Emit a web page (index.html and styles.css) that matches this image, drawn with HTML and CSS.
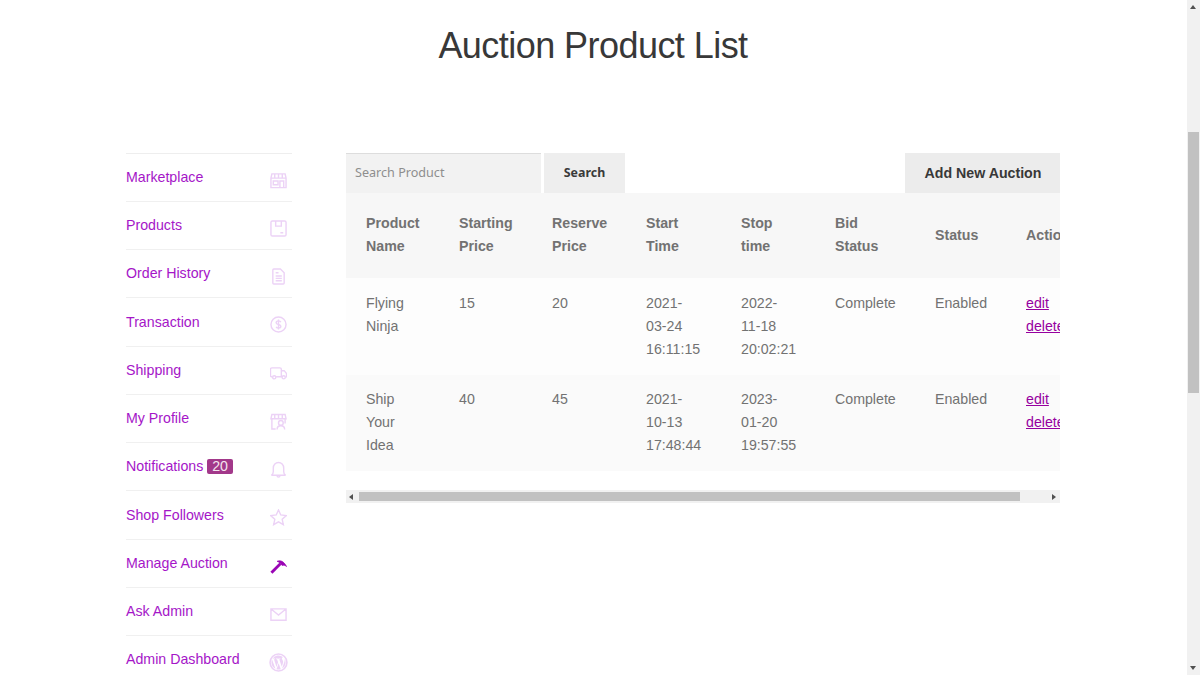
FILE: index.html
```html
<!DOCTYPE html>
<html lang="en">
<head>
<meta charset="utf-8">
<title>Auction Product List</title>
<link rel="stylesheet" href="styles.css">
</head>
<body>
<div class="page">
  <h1 class="title">Auction Product List</h1>
  <div class="layout">
    <nav class="side">
      <a class="item" href="#"><span>Marketplace</span>
        <svg class="ico" viewBox="0 0 18 18"><path d="M2 2h14l1 4.500v10h-16v-10zM1 6.500h16M5 2v4.500M9 2v4.500M13 2v4.500M3.500 9.500h5v4h-5zM10.500 16.500v-7h4v7"/></svg></a>
      <a class="item" href="#"><span>Products</span>
        <svg class="ico" viewBox="0 0 18 18"><path d="M2.500 1h13a1.500 1.500 0 0 1 1.500 1.500v13a1.500 1.500 0 0 1-1.500 1.500h-13a1.500 1.500 0 0 1-1.500-1.500v-13a1.500 1.500 0 0 1 1.500-1.500zM6 1v5.500h6v-5.500M11 13.500h3"/></svg></a>
      <a class="item" href="#"><span>Order History</span>
        <svg class="ico" viewBox="0 0 18 18"><path d="M4 1h7l4 4v11a1 1 0 0 1-1 1h-10a1 1 0 0 1-1-1v-14a1 1 0 0 1 1-1zM6 5h3M6 8.500h6.500M6 11h6.500M6 13.500h6.500"/></svg></a>
      <a class="item" href="#"><span>Transaction</span>
        <svg class="ico" viewBox="0 0 18 18"><circle cx="9" cy="9" r="8"/><path d="M11.500 6.500c-.5-1-1.500-1.300-2.500-1.300-1.300 0-2.500.7-2.500 1.900 0 2.700 5 1.200 5 3.800 0 1.200-1.200 1.900-2.500 1.900-1 0-2-.4-2.500-1.300M9 3.800v10.400"/></svg></a>
      <a class="item" href="#"><span>Shipping</span>
        <svg class="ico" viewBox="0 0 18 18"><path d="M2.500 12.500h-.5a1.500 1.500 0 0 1-1.500-1.500v-6.500a1.500 1.500 0 0 1 1.500-1.500h8.500a1.500 1.500 0 0 1 1.500 1.500v8h-5.500M12 6h3l2.500 3v3.500h-1M12 12.500h.5"/><circle cx="4.500" cy="13" r="1.700"/><circle cx="14.500" cy="13" r="1.700"/></svg></a>
      <a class="item" href="#"><span>My Profile</span>
        <svg class="ico" viewBox="0 0 18 18"><path d="M2 1.500h14l1 4.500h-16zM5 1.500v4.500M9 1.500v4.500M13 1.500v4.500M2 6v11h4M16 6v5M2 13v-1"/><circle cx="11.500" cy="10.500" r="2.500"/><path d="M7.500 17.500c0-3 1.500-4 4-4s4 1 4 4"/></svg></a>
      <a class="item" href="#"><span class="label">Notifications <b class="badge">20</b></span>
        <svg class="ico" viewBox="0 0 18 18"><path d="M1.500 15c1.300-.7 2-2 2-4v-3.500a5.500 6 0 0 1 11 0v3.500c0 2 .7 3.300 2 4zM7.500 15.500c0 2 3 2 3 0"/></svg></a>
      <a class="item" href="#"><span>Shop Followers</span>
        <svg class="ico" viewBox="0 0 18 18"><path d="M9 1l2.400 5.300 5.800.7-4.300 3.900 1.200 5.700-5.100-2.900-5.100 2.900 1.200-5.700-4.300-3.900 5.800-.7z"/></svg></a>
      <a class="item" href="#"><span>Manage Auction</span>
        <svg class="ico" viewBox="0 0 18 18"><path class="handle" d="M1.500 15.500l9.500-9.500"/><path class="fill" d="M7.500 3.500c3-1.300 7-.5 10 5.500-1.500-1.300-3-1.800-4.500-1l-2.500-2.500c-.8-1-1.800-1.700-3-2z"/></svg></a>
      <a class="item" href="#"><span>Ask Admin</span>
        <svg class="ico" viewBox="0 0 18 18"><path d="M1 3h16v12h-16zM1.500 3.500l7.500 6 7.500-6"/></svg></a>
      <a class="item" href="#"><span>Admin Dashboard</span>
        <svg class="ico ico-big" viewBox="0 0 18 18"><circle cx="9" cy="9" r="8"/><path class="wp" d="M2.300 9c0 2.700 1.600 5 3.800 6l-3.200-8.800c-.4.900-.6 1.800-.6 2.800zM13.500 8.700c0-.8-.3-1.400-.6-1.900-.3-.5-.7-1-.7-1.500 0-.6.500-1.200 1.100-1.200h.1a6.700 6.700 0 0 0-10.100 1.300h.4c.7 0 1.800-.1 1.800-.1.400 0 .4.500 0 .6 0 0-.4 0-.8.100l2.400 7.200 1.500-4.400-1-2.800c-.4 0-.7-.1-.7-.1-.4 0-.3-.6 0-.6 0 0 1.100.1 1.800.1s1.800-.1 1.800-.1c.4 0 .4.500 0 .6 0 0-.4 0-.8.100l2.400 7.100.7-2.200c.3-.9.500-1.600.5-2.200zM9.100 9.600l-2 5.800a6.700 6.700 0 0 0 4.100-.1zM14.900 5.800c0 .2 0 .5 0 .7 0 .7-.1 1.400-.5 2.400l-2 5.900a6.700 6.700 0 0 0 2.500-9z"/></svg></a>
    </nav>
    <main class="main">
      <div class="toolbar">
        <div class="search">
          <input class="search-input" type="text" placeholder="Search Product">
          <button class="search-btn" type="button">Search</button>
        </div>
        <button class="add-btn" type="button">Add New Auction</button>
      </div>
      <div class="table-clip">
        <table class="table">
          <colgroup>
            <col class="c1"><col class="c2"><col class="c3"><col class="c4"><col class="c5"><col class="c6"><col class="c7"><col class="c8">
          </colgroup>
          <thead>
            <tr><th>Product Name</th><th>Starting Price</th><th>Reserve Price</th><th>Start Time</th><th>Stop time</th><th>Bid Status</th><th>Status</th><th>Action</th></tr>
          </thead>
          <tbody>
            <tr><td>Flying Ninja</td><td>15</td><td>20</td><td>2021-03-24 16:11:15</td><td>2022-11-18 20:02:21</td><td>Complete</td><td>Enabled</td><td><a href="#">edit</a><br><a href="#">delete</a></td></tr>
            <tr><td>Ship Your Idea</td><td>40</td><td>45</td><td>2021-10-13 17:48:44</td><td>2023-01-20 19:57:55</td><td>Complete</td><td>Enabled</td><td><a href="#">edit</a><br><a href="#">delete</a></td></tr>
          </tbody>
        </table>
      </div>
      <div class="hbar"><i class="arrow-l"></i><i class="hthumb"></i><i class="arrow-r"></i></div>
    </main>
  </div>
</div>
<div class="vbar"><i class="arrow-u"></i><i class="vthumb"></i><i class="arrow-d"></i></div>
</body>
</html>
```
FILE: styles.css
```css
* { box-sizing: border-box; }
html, body { margin: 0; height: 100%; overflow: hidden; background: #fff; }
body { font-family: "Liberation Sans", Arial, sans-serif; font-size: 14.2px; color: #727272; }
.page { width: 934px; margin-left: 126px; }
.title { margin: 0; padding-top: 25px; height: 153px; text-align: center; font-size: 36px; line-height: 42px; font-weight: 400; color: #383838; letter-spacing: -.55px; }
.layout { display: flex; gap: 54px; align-items: flex-start; }
.side { width: 166px; flex: none; margin-top: -.4px; border-top: 1px solid #eee; }
.item { display: flex; justify-content: space-between; align-items: center; height: 48.25px; padding: 0 5px 0 0; border-bottom: 1px solid #f0f0f0; color: #a516c8; text-decoration: none; line-height: 23px; }
.item > span { margin-top: .4px; }
.ico { width: 17px; height: 17px; margin-top: 6px; fill: none; stroke: #ecd2f6; stroke-width: 1.5; flex: none; }
.ico-big { width: 19px; height: 19px; margin-right: -1px; }
.handle { stroke: #9a05b5; stroke-width: 3; }
.fill { fill: #9a05b5; stroke: #9a05b5; stroke-width: .8; }
.wp { fill: #ecd2f6; stroke: none; }
.badge { display: inline-block; font-weight: 400; font-size: 14.2px; line-height: 15px; padding: 0 5px; background: #a2388a; color: #f4e4ee; border-radius: 2px; }
.main { width: 714px; flex: none; }
.toolbar { display: flex; justify-content: space-between; height: 40px; }
.search { display: flex; gap: 3px; }
.search-input { width: 195px; height: 40px; border: 0; border-top: 1px solid #ddd; background: #f2f2f2; padding: 0 9px 2px; font: 12.6px "Noto Sans", sans-serif; color: #777; outline: 0; border-radius: 0; }
.search-input::placeholder { color: #8e8e8e; opacity: 1; }
.search-btn { width: 81px; height: 40px; border: 0; background: #eeeeee; font: 700 12.4px "Noto Sans", sans-serif; color: #3a3a3a; padding: 0 0 1px; }
.add-btn { width: 155px; height: 40px; border: 0; background: #ececec; font: 700 14.2px "Liberation Sans", sans-serif; color: #383838; padding: 0 0 1px 1px; }
.table-clip { overflow: hidden; width: 714px; }
.table { border-collapse: collapse; table-layout: fixed; width: 774px; }
.c1, .c2 { width: 93px; }
.c3 { width: 94px; }
.c4 { width: 95px; }
.c5 { width: 94px; }
.c6 { width: 100px; }
.c7 { width: 91px; }
.c8 { width: 114px; }
th, td { padding: 0 20px; text-align: left; line-height: 23px; }
th { height: 85px; padding-bottom: 1px; background: #f7f7f7; font-weight: 700; }
td { padding-top: 13.5px; padding-bottom: 13.5px; vertical-align: top; height: 96.500px; }
tbody tr:nth-child(1) td { background: #fdfdfd; }
tbody tr:nth-child(2) td { background: #fafafa; }
td a { color: #96009f; }
.hbar { display: flex; align-items: center; height: 13px; margin-top: 19px; background: #f1f1f1; }
.hthumb { display: block; width: 661px; height: 9px; margin-left: 6px; background: #c1c1c1; }
.arrow-l { display: block; width: 0; height: 0; margin-left: 3px; border: 3.500px solid transparent; border-left: 0; border-right: 4px solid #505050; }
.arrow-r { display: block; width: 0; height: 0; margin-left: auto; margin-right: 4px; border: 3.500px solid transparent; border-right: 0; border-left: 4px solid #505050; }
.vbar { position: fixed; top: 0; right: 0; width: 13px; height: 675px; background: #f1f1f1; }
.vthumb { position: absolute; left: 1px; top: 132px; width: 11px; height: 261px; background: #c1c1c1; }
.arrow-u { position: absolute; left: 3px; top: 5px; width: 0; height: 0; border: 3.500px solid transparent; border-top: 0; border-bottom: 4px solid #505050; }
.arrow-d { position: absolute; left: 3px; bottom: 5px; width: 0; height: 0; border: 3.500px solid transparent; border-bottom: 0; border-top: 4px solid #505050; }
```
